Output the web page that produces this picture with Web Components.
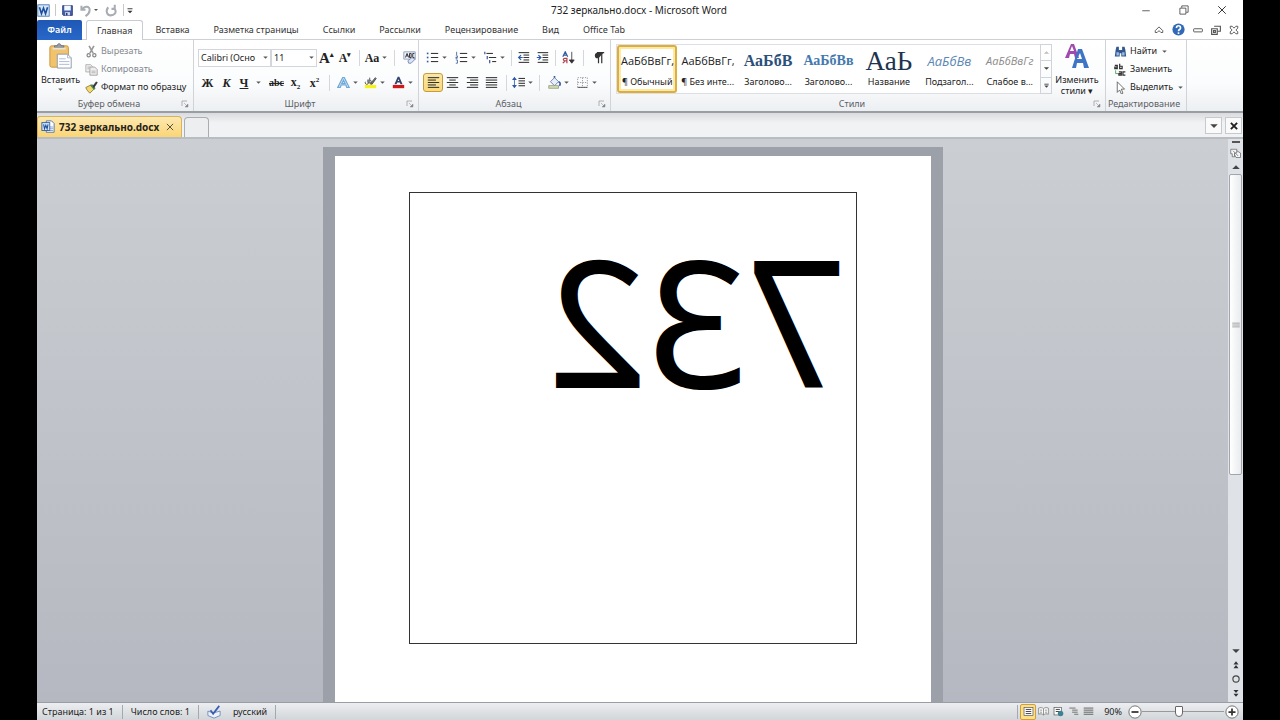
<!DOCTYPE html>
<html lang="ru">
<head>
<meta charset="utf-8">
<title>732 зеркально.docx - Microsoft Word</title>
<style>
html,body{margin:0;height:100%;background:#000}
body{font:9px/14px "Noto Sans","Open Sans",sans-serif;color:#222;overflow:hidden}
</style>
</head>
<body>
<word-app></word-app>
<script>
const base = `
*{box-sizing:border-box}
button,select,input{font:inherit;color:inherit;margin:0}
button{border:0;background:none;padding:0;display:flex;align-items:center;justify-content:center;white-space:nowrap}
a{color:inherit;text-decoration:none}
svg{display:block}
`;
function define(name, css, html) {
  customElements.define(name, class extends HTMLElement {
    constructor() {
      super();
      const markup = typeof html === 'function' ? html(this) : html;
      this.attachShadow({mode: 'open'}).innerHTML = `<style>${base}${css}</style>${markup}`;
    }
  });
}

const lines = (rows, c = '#333') => rows.map(([y, a, b]) => `<path d="M${a} ${y}H${b}" stroke="${c}" stroke-width="1.3"/>`).join('');
const icons = {
  word: `<rect x="1" y="1" width="14" height="14" fill="#d5e6f8" stroke="#3a6cab"/><path d="M3 4l2.500 8L8 5l2.500 7L13 4" fill="none" stroke="#1b4f9c" stroke-width="2"/>`,
  save: `<path d="M2 2h12v12H3l-1-1z" fill="#4560a8" stroke="#27397a"/><rect x="4" y="2" width="8" height="6" fill="#f4f7fc"/><rect x="5" y="10" width="6" height="4" fill="#d3daea"/><rect x="6" y="11" width="2" height="3" fill="#27397a"/>`,
  undo: `<path d="M3 2v5h5M4 7c3-6 10-4 9 1 0 3-2 5-5 7" fill="none" stroke="#a9acb2" stroke-width="2.500"/>`,
  redo: `<path d="M12 1v5H8M12 6c3 5-1 8-5 8s-7-5-3-10" fill="none" stroke="#a9acb2" stroke-width="2.500"/>`,
  qat: `<path d="M4 6h8" stroke="#333" stroke-width="1.500"/><path d="M4 9h8l-4 4z" fill="#333"/>`,
  arrow: `<path d="M4 6h8l-4 4z" fill="#555"/>`,
  up: `<path d="M2 11h12L8 5z" fill="#444"/>`,
  down: `<path d="M2 5h12l-6 6z" fill="#444"/>`,
  more: `<path d="M3 5h10" stroke="#444" stroke-width="2"/><path d="M3 8h10l-5 5z" fill="#444"/>`,
  paste: `<rect x="2" y="3" width="20" height="23" rx="2" fill="#f0c36c" stroke="#c9953c"/><path d="M7 5V3h3c0-3 4-3 4 0h3v2z" fill="#9a9ea6" stroke="#6e727a"/><path d="M5 6h14" stroke="#e8e3d6" stroke-width="2"/><path d="M10 12h11l4 4v11H10z" fill="#fff" stroke="#8d97ab"/><path d="M21 12v4h4M12 17h7m-7 3h11m-11 3h11" fill="none" stroke="#a9b8d4"/>`,
  cut: `<path d="M5 1l5 9M11 1L6 10" stroke="#999" stroke-width="2"/><circle cx="4.500" cy="12.500" r="2" fill="none" stroke="#888" stroke-width="1.500"/><circle cx="11.500" cy="12.500" r="2" fill="none" stroke="#888" stroke-width="1.500"/>`,
  copy: `<path d="M1 2h6l2 2v7H1z" fill="#eee" stroke="#aaa"/><path d="M6 5h6l3 3v7H6z" fill="#eee" stroke="#999"/><path d="M3 5h3M3 7h2M8 10h5M8 12h5" stroke="#aaa"/>`,
  brush: `<path d="M1 8l6-3 4 5-5 5C4 13 2 11 1 8z" fill="#f1d96b" stroke="#8a7430"/><path d="M6 5l3-1 4 5-2 2z" fill="#4a8a57"/><path d="M10 6l4-5 1 1-4 6z" fill="#333" stroke="#333"/>`,
  launch: `<path d="M2 12V2h10" fill="none" stroke="#999" stroke-width="1.500"/><path d="M6 6l6 6M14 8v6H8z" fill="#888" stroke="#888"/>`,
  grow: `<path d="M12 5l2-3 2 3z" fill="#222"/>`,
  shrink: `<path d="M12 2h4l-2 3z" fill="#222"/>`,
  clear: `<path d="M1 1h14v9H1z" fill="#eef2fa" stroke="#8090b4"/><path d="M3 8l2-5 2 5M4 6h2M8 3v5h2V3H8M14 3h-2v5h2" fill="none" stroke="#333" stroke-width="1.200"/><path d="M6 12l5-4 4 2-5 5H7z" fill="#dbe3f2" stroke="#6a7fae"/>`,
  outlineA: `<path d="M1 14L7 2h2l6 12h-3l-1-3H5l-1 3zM6 9h4L8 5z" fill="#e8f3fd" stroke="#6fa8d8" stroke-width="1.500"/>`,
  marker: `<path d="M2 7a2 2 0 1 0 3 0V4M5 9V5M7 2v7a2 2 0 1 0 0-4" fill="none" stroke="#444"/><path d="M9 8l5-6 1 1-5 7-2 0z" fill="#777" stroke="#444"/><rect x="1" y="11" width="14" height="4" fill="#f7f218"/>`,
  colorA: `<path d="M3 10L7 1h2l4 9h-2.500l-1-2h-3l-1 2zM7 6h2L8 4z" fill="#34456d"/><rect x="1" y="11" width="14" height="4" fill="#cf1919"/>`,
  bullets: `<g fill="#3a5a96"><rect x="1" y="2" width="2" height="2"/><rect x="1" y="7" width="2" height="2"/><rect x="1" y="12" width="2" height="2"/></g>` + lines([[3,6,15],[8,6,15],[13,6,15]]),
  numbers: `<path d="M2 1v4M1 6h2v2H1v1h2M1 11h2v4H1" fill="none" stroke="#3a5a96"/>` + lines([[3,6,15],[8,6,15],[13,6,15]]),
  multi: `<path d="M1 1v3M4 6v4M7 11v4" stroke="#3a5a96" stroke-width="1.500"/>` + lines([[3,3,11],[8,6,15],[13,10,15]]),
  outdent: lines([[2,2,15],[5,8,15],[8,8,15],[11,8,15],[14,2,15]]) + `<path d="M7 8H2m3-3L2 8l3 3" fill="none" stroke="#2c58a8" stroke-width="1.500"/>`,
  indent: lines([[2,2,15],[5,8,15],[8,8,15],[11,8,15],[14,2,15]]) + `<path d="M1 8h5M3 5l3 3-3 3" fill="none" stroke="#2c58a8" stroke-width="1.500"/>`,
  sort: `<path d="M1 7l3-6 3 6M2 5h4" fill="none" stroke="#335a9c" stroke-width="1.500"/><path d="M6 15V9H3.500C1 9 1 12 3.500 12H6M4 12l-3 3" fill="none" stroke="#b0434b" stroke-width="1.500"/><path d="M12 1v11M9 11l3 4 3-4z" fill="#333" stroke="#333"/>`,
  pilcrow: `<path d="M14 2H7a3.500 3.500 0 0 0 0 7h1" fill="#333"/><path d="M8 2v13M12 2v13M6 2h9" stroke="#333" stroke-width="1.500"/>`,
  left: lines([[2,1,15],[5,1,11],[8,1,15],[11,1,11],[14,1,15]]),
  center: lines([[2,1,15],[5,4,12],[8,1,15],[11,4,12],[14,1,15]]),
  right: lines([[2,1,15],[5,5,15],[8,1,15],[11,5,15],[14,1,15]]),
  justify: lines([[2,1,15],[5,1,15],[8,1,15],[11,1,15],[14,1,15]]),
  spacing: `<path d="M3 3v10" stroke="#2c58a8"/><path d="M0 5l3-4 3 4zM0 11l3 4 3-4z" fill="#2c58a8"/>` + lines([[3,8,16],[6,8,16],[9,8,16],[12,8,16]]),
  bucket: `<path d="M3 7l5-5 5 5-5 5z" fill="#e9eff8" stroke="#56709f"/><path d="M8 2V0M13 7c3 1 2 4 1 5" fill="none" stroke="#2c58a8" stroke-width="2"/><rect x="1" y="12" width="12" height="3" fill="#d9e3b4" stroke="#8b9673"/>`,
  borders: `<path d="M2 2h12v12H2zM8 2v12M2 8h12" fill="none" stroke="#888" stroke-dasharray="1.500 1.500"/><path d="M2 14h12" stroke="#444"/>`,
  styles: `<path d="M1 15L7 1h3l5 14h-4l-1-4H6l-1 4zM6 8h4L8 3z" fill="#a04aae"/><path d="M8 25l6-19h4l7 19h-5l-1-5h-6l-1 5zM13 16h5l-2-6z" fill="#3d74c6"/>`,
  find: `<path d="M2 6l1-4h3v4h4V2h3l1 4 1 8H9v-4H7v4H1z" fill="#31588f"/><path d="M3 9h3v4H3zM10 9h3v4h-3z" fill="#9dbbe0"/>`,
  replace: `<path d="M1 3h3v4H1V5h3M7 1v6h3V4H7M6 11h3v4H6v-2h3M14 11h-3v4h3" fill="none" stroke="#333" stroke-width="1.500"/><path d="M2 9v4h3" fill="none" stroke="#3a9c46"/>`,
  cursor: `<path d="M4 1l9 9H9l2 5-2 1-2-5-3 3z" fill="#fff" stroke="#555"/>`,
  min: `<path d="M3 9h10" stroke="#333"/>`,
  restore: `<path d="M2.500 5.500h8v8h-8zM5 5V2.500h8.500V11H11" fill="none" stroke="#333"/>`,
  close: `<path d="M3 3l10 10M13 3L3 13" stroke="#333" stroke-width="1.300"/>`,
  bold: `<path d="M3 3l10 10M13 3L3 13" stroke="#222" stroke-width="3"/>`,
  collapse: `<path d="M2 9l6-6 6 6v3H11L8 9l-3 3H2z" fill="#fff" stroke="#555" stroke-width="1.500"/>`,
  help: `<circle cx="8" cy="8" r="7.500" fill="#2f69b7"/><path d="M5.500 6c0-3.500 5-3.500 5 0 0 2-2.500 2-2.500 4M8 11.500v2" fill="none" stroke="#fff" stroke-width="2"/>`,
  bar: `<rect x="1" y="6" width="14" height="5" rx="1" fill="#fff" stroke="#555" stroke-width="1.500"/>`,
  mdi: `<path d="M5 2h10v8h-4M1 6h9v9H1zM4 9h3v3H4z" fill="none" stroke="#555" stroke-width="1.800"/>`,
  mdx: `<path d="M2 2h3l3 3 3-3h3v3l-3 3 3 3v3h-3l-3-3-3 3H2v-3l3-3-3-3z" fill="#fff" stroke="#555" stroke-width="1.500"/>`,
  doc: `<path d="M6 1h6l3 3v10H6z" fill="#fff" stroke="#4a6da6"/><path d="M10 8h4M10 10h4M10 12h4" stroke="#7c9bcc"/><rect x="1" y="3" width="9" height="9" fill="#d6e5f7" stroke="#2c5aa0"/><path d="M3 5l1 5 1.500-4L7 10l1-5" fill="none" stroke="#1b4f9c" stroke-width="1.200"/>`,
  ruler: `<path d="M1 3h8v5H6v5H3V9H1zM9 5l5 3v6H8l-2-4" fill="#f5f6f8" stroke="#666"/><path d="M4 5l7 7" stroke="#666"/>`,
  grip: `<path d="M2 5h12M2 8h12M2 11h12" stroke="#777"/>`,
  pgup: `<path d="M4 7h8L8 2zM4 13h8L8 8z" fill="#333"/>`,
  pgdn: `<path d="M4 3h8L8 8zM4 9h8l-4 5z" fill="#333"/>`,
  ball: `<circle cx="8" cy="8" r="5" fill="#dfe3e8" stroke="#444" stroke-width="1.800"/>`,
  spell: `<path d="M1 7l6 2 8-2v5l-7 3-7-3z" fill="#eef3fb" stroke="#6c87bd"/><path d="M4 6l3 4 7-9" fill="none" stroke="#3a5fb0" stroke-width="2"/>`,
  print: `<rect x="1.500" y="2" width="13" height="12" fill="#fff" stroke="#555"/>` + lines([[5,4,12],[8,4,12],[11,4,12]]),
  read: `<path d="M8 4C6 2 3 2 1 3v9c2-1 5-1 7 1 2-2 5-2 7-1V3c-2-1-5-1-7 1v9M3 6h3M3 9h3M10 6h3M10 9h3" fill="#fff" stroke="#666"/>`,
  web: `<rect x="1.500" y="2" width="11" height="11" fill="#fff" stroke="#555"/>` + lines([[5,4,10],[8,4,9]]) + `<circle cx="11" cy="11" r="4" fill="#3e8291"/>`,
  outline: lines([[3,2,11],[6,6,14],[9,6,14],[12,9,15]], '#666'),
  draft: lines([[3,1,15],[6,1,15],[9,1,15],[12,1,15]], '#555'),
  minus: `<circle cx="8" cy="8" r="7" fill="#fff" stroke="#666"/><path d="M4 8h8" stroke="#333" stroke-width="2"/>`,
  plus: `<circle cx="8" cy="8" r="7" fill="#fff" stroke="#666"/><path d="M4 8h8M8 4v8" stroke="#333" stroke-width="2"/>`
};
const large = {paste: 28, styles: 26};

define('ui-icon', `:host{display:block;flex:none;width:var(--s,13px);height:var(--s,13px)}svg{width:100%;height:100%}`,
  el => { const n = el.getAttribute('name'), v = large[n] || 16;
    return `<svg viewBox="0 0 ${v} ${v}" aria-hidden="true">${icons[n]}</svg>`; });

define('tool-sep', `:host{display:block;flex:none;width:1px;height:16px;background:#d4d7db;margin:0 var(--g,5px)}`, '');

/* Ribbon button holding an icon or a glyph, with an optional drop-down arrow. */
define('tool-button', `
:host{display:block;flex:none;width:var(--w,19px)}
button{width:100%;height:19px;gap:1px;border:1px solid transparent;border-radius:3px}
:host([pressed]) button{border-color:#c89b3a;background:linear-gradient(#fbe6a2,#f9d97a)}
.arr{--s:9px}`,
  el => `<button type="button" aria-label="${el.getAttribute('label') || el.textContent.trim()}">${el.hasAttribute('icon') ? `<ui-icon name="${el.getAttribute('icon')}"></ui-icon>` : ''}<slot></slot>${el.hasAttribute('menu') ? '<ui-icon class="arr" name="arrow"></ui-icon>' : ''}</button>`);

define('text-tool', `
:host{display:block;flex:none}
button{height:18px;gap:3px}
:host([off]) button{color:#85898e}
.arr{--s:9px}`,
  el => `<button type="button"><ui-icon name="${el.getAttribute('icon')}"></ui-icon><slot></slot>${el.hasAttribute('menu') ? '<ui-icon class="arr" name="arrow"></ui-icon>' : ''}</button>`);

define('big-tool', `
:host{display:block;flex:none}
button{flex-direction:column;width:100%;line-height:11px;white-space:normal}
ui-icon{--s:26px}
.arr{--s:9px}
span{padding-top:5px}`,
  el => `<button type="button"><ui-icon name="${el.getAttribute('icon')}"></ui-icon><span><slot></slot></span>${el.hasAttribute('menu') ? '<ui-icon class="arr" name="arrow"></ui-icon>' : ''}</button>`);

define('combo-box', `
:host{display:flex;align-items:center;flex:none;width:var(--w);height:18px;border:1px solid #d3d6da;background:#fff}
select{appearance:none;border:0;background:none;flex:1;min-width:0;padding:0 0 0 2px;outline:0}
ui-icon{--s:9px}`,
  el => `<select aria-label="${el.getAttribute('label')}"><option>${el.getAttribute('value')}</option></select><ui-icon name="arrow"></ui-icon>`);

define('ribbon-group', `
:host{display:flex;flex-direction:column;flex:none;width:var(--gw);border-right:1px solid #d0d4d9}
.body{flex:1;display:flex;padding:var(--p,0 4px);min-height:0}
footer{display:flex;align-items:center;height:14px;color:#5c6065;padding-right:4px}
footer span{flex:1;text-align:center;white-space:nowrap}
ui-icon{--s:8px}`,
  el => `<div class="body"><slot></slot></div><footer><span>${el.getAttribute('label')}</span>${el.hasAttribute('launcher') ? '<ui-icon name="launch"></ui-icon>' : ''}</footer>`);

define('tool-rows', `
:host{display:flex;flex-direction:column;gap:6px;padding-top:8px}
::slotted(div){display:flex;align-items:center;height:19px}`, '<slot></slot>');

define('style-card', `
:host{display:block;min-width:0}
button{flex-direction:column;width:100%;height:48px;border:2px solid transparent;overflow:hidden}
:host([current]) button{border-color:#dcae3f;border-radius:3px;box-shadow:inset 0 0 0 2px #fbe9a4}
.sample{height:28px;width:100%;padding:0 2px;overflow:hidden;display:flex;align-items:center;justify-content:safe center;font:var(--f,11px/28px "Open Sans",sans-serif);color:var(--c,#222)}
.name{height:16px;line-height:14px}`,
  el => `<button type="button"><span class="sample">${el.getAttribute('sample')}</span><span class="name"><slot></slot></span></button>`);

define('title-bar', `
:host{display:grid;grid-template-columns:1fr auto 1fr;align-items:center;height:20px;background:#fff;font-size:10px;color:#222}
.qat,.win{display:flex;align-items:center;height:18px}
.qat{gap:5px}
.qat .arr{--s:8px}
i{width:1px;height:12px;background:#c8c8c8}
.qat .tight{margin-left:-4px}
.win{justify-content:flex-end;gap:26px;padding-right:15px}
.win ui-icon{--s:12px}
h1{margin:0;font:inherit;padding-right:2px}`,
`<div class="qat"><ui-icon name="word"></ui-icon><i></i><button aria-label="Сохранить"><ui-icon name="save"></ui-icon></button><button aria-label="Отменить"><ui-icon name="undo"></ui-icon><ui-icon class="arr" name="arrow"></ui-icon></button><button aria-label="Повторить"><ui-icon name="redo"></ui-icon></button><i></i><button class="tight" aria-label="Настройка панели"><ui-icon name="qat" style="--s:10px"></ui-icon></button></div>
<h1>732 зеркально.docx - Microsoft Word</h1>
<div class="win"><button aria-label="Свернуть"><ui-icon name="min"></ui-icon></button><button aria-label="Восстановить"><ui-icon name="restore"></ui-icon></button><button aria-label="Закрыть"><ui-icon name="close"></ui-icon></button></div>`);

define('ribbon-tabs', `
:host{display:flex;height:20px;background:#fff;border-bottom:1px solid #cdd1d6;color:#333}
nav{display:flex}
a{padding:0 12px;line-height:20px;height:20px;white-space:nowrap}
.file{width:45px;padding:0;text-align:center;background:linear-gradient(#1f57b4,#2868c9);color:#fff;border-radius:2px 2px 0 0;margin-right:4px;font-weight:600}
.on{padding:0 10px;border:1px solid #c8ccd1;border-bottom:0;border-radius:3px 3px 0 0;background:#fff;line-height:19px}
div{display:flex;align-items:center;gap:8px;margin-left:auto;padding-right:4px}
div ui-icon{--s:10px}
div .help{--s:13px}`,
`<nav><a class="file" href="#">Файл</a><a class="on" href="#">Главная</a><a href="#">Вставка</a><a href="#">Разметка страницы</a><a href="#">Ссылки</a><a href="#">Рассылки</a><a href="#">Рецензирование</a><a href="#">Вид</a><a href="#">Office Tab</a></nav>
<div><button aria-label="Свернуть ленту"><ui-icon name="collapse"></ui-icon></button><button aria-label="Справка"><ui-icon class="help" name="help"></ui-icon></button><button aria-label="Свернуть окно"><ui-icon name="bar"></ui-icon></button><button aria-label="Восстановить окно"><ui-icon name="mdi"></ui-icon></button><button aria-label="Закрыть окно"><ui-icon name="mdx"></ui-icon></button></div>`);

define('word-ribbon', `
:host{display:flex;height:73px;background:linear-gradient(#fff,#fbfcfd 60%,#eceff2);border-bottom:2px solid #9a9da2}
.stack{display:flex;flex-direction:column;padding-top:2px}
.gl{font:bold 12px/16px "Liberation Serif",serif;color:#222}
.big{font-size:15px}
.it{font-style:italic}
.un{text-decoration:underline;padding-right:5px}
.st{text-decoration:line-through;font-size:10px}
sub,sup{font-size:7px;line-height:7px}
.gallery{display:grid;grid-template-columns:repeat(7,minmax(0,1fr));width:424px;height:50px;border:1px solid #dcdfe3;border-right:0;background:#fff;margin-top:4px}
.scroll{display:grid;width:12px;height:50px;margin-top:4px;border:1px solid #d0d3d7}
.scroll button+button{border-top:1px solid #d0d3d7}
.scroll ui-icon{--s:7px}
.edit{padding-left:4px}`,
`<ribbon-group label="Буфер обмена" launcher style="--gw:157px;--p:0 2px">
  <big-tool icon="paste" menu style="width:43px;padding-top:3px">Вставить</big-tool>
  <div class="stack" style="padding-left:3px"><text-tool icon="cut" off>Вырезать</text-tool><text-tool icon="copy" off>Копировать</text-tool><text-tool icon="brush">Формат по образцу</text-tool></div>
</ribbon-group>
<ribbon-group label="Шрифт" launcher style="--gw:225px">
  <tool-rows>
    <div><combo-box label="Шрифт" value="Calibri (Осно" style="--w:73px"></combo-box><combo-box label="Размер" value="11" style="--w:46px"></combo-box><tool-button label="Увеличить размер"><span class="gl big">A<sup>▴</sup></span></tool-button><tool-button label="Уменьшить размер" style="--w:18px"><span class="gl">A<sup>▾</sup></span></tool-button><tool-sep></tool-sep><tool-button label="Регистр" menu style="--w:24px"><span class="gl">Aa</span></tool-button><tool-sep></tool-sep><tool-button icon="clear" label="Очистить формат"></tool-button></div>
    <div><tool-button><span class="gl">Ж</span></tool-button><tool-button><span class="gl it">К</span></tool-button><tool-button menu style="--w:31px"><span class="gl un">Ч</span></tool-button><tool-button><span class="gl st">abc</span></tool-button><tool-button><span class="gl">x<sub>2</sub></span></tool-button><tool-button><span class="gl">x<sup>2</sup></span></tool-button><tool-sep></tool-sep><tool-button icon="outlineA" label="Эффекты" menu style="--w:26px"></tool-button><tool-button icon="marker" label="Выделение" menu style="--w:28px"></tool-button><tool-button icon="colorA" label="Цвет" menu style="--w:28px"></tool-button></div>
  </tool-rows>
</ribbon-group>
<ribbon-group label="Абзац" launcher style="--gw:192px">
  <tool-rows>
    <div><tool-button icon="bullets" label="Маркеры" menu style="--w:29px"></tool-button><tool-button icon="numbers" label="Нумерация" menu style="--w:29px"></tool-button><tool-button icon="multi" label="Список" menu style="--w:28px"></tool-button><tool-sep style="--g:2px"></tool-sep><tool-button icon="outdent" label="Уменьшить отступ"></tool-button><tool-button icon="indent" label="Увеличить отступ"></tool-button><tool-sep style="--g:3px"></tool-sep><tool-button icon="sort" label="Сортировка"></tool-button><tool-sep></tool-sep><tool-button icon="pilcrow" label="Знаки"></tool-button></div>
    <div><tool-button icon="left" label="По левому краю" pressed style="--w:20px"></tool-button><tool-button icon="center" label="По центру"></tool-button><tool-button icon="right" label="По правому краю" style="--w:20px"></tool-button><tool-button icon="justify" label="По ширине"></tool-button><tool-sep></tool-sep><tool-button icon="spacing" label="Интервал" menu style="--w:22px"></tool-button><tool-sep></tool-sep><tool-button icon="bucket" label="Заливка" menu style="--w:28px"></tool-button><tool-button icon="borders" label="Границы" menu style="--w:28px"></tool-button></div>
  </tool-rows>
</ribbon-group>
<ribbon-group label="Стили" launcher style="--gw:495px;--p:0 2px 0 5px">
  <div class="gallery">
    <style-card current sample="АаБбВвГг,">¶ Обычный</style-card>
    <style-card sample="АаБбВвГг,">¶ Без инте...</style-card>
    <style-card sample="АаБбВ" style="--f:bold 16px/28px 'Liberation Serif',serif;--c:#2b5079">Заголово...</style-card>
    <style-card sample="АаБбВв" style="--f:bold 14px/28px 'Liberation Serif',serif;--c:#4379ae">Заголово...</style-card>
    <style-card sample="АаЬ" style="--f:27px/28px 'Liberation Serif',serif;--c:#1d3450">Название</style-card>
    <style-card sample="АаБбВв" style="--f:italic 13px/28px 'Open Sans',sans-serif;--c:#5c87b4">Подзагол...</style-card>
    <style-card sample="АаБбВвГг" style="--f:italic 11px/28px 'Open Sans',sans-serif;--c:#8a8a8a">Слабое в...</style-card>
  </div>
  <div class="scroll"><button aria-label="Вверх" style="opacity:.35"><ui-icon name="up"></ui-icon></button><button aria-label="Вниз"><ui-icon name="down"></ui-icon></button><button aria-label="Ещё"><ui-icon name="more"></ui-icon></button></div>
  <big-tool icon="styles" style="width:50px;padding-top:3px">Изменить стили&nbsp;▾</big-tool>
</ribbon-group>
<ribbon-group label="Редактирование" style="--gw:81px">
  <div class="stack edit"><text-tool icon="find" menu>Найти</text-tool><text-tool icon="replace">Заменить</text-tool><text-tool icon="cursor" menu>Выделить</text-tool></div>
</ribbon-group>`);

define('doc-tabs', `
:host{display:flex;align-items:flex-end;height:26px;background:linear-gradient(#d9dbde,#f1f2f3 40%,#f1f2f3);border-bottom:2px solid #b9bcc1}
.tab{display:flex;align-items:center;gap:4px;height:21px;padding:0 6px 0 3px;background:linear-gradient(#fce9b0,#fbd575);border:1px solid #d9b35c;border-bottom:0;border-radius:3px 4px 0 0;font-weight:bold;font-size:10px;color:#222}
.tab button{margin-left:2px}
.new{width:25px;height:20px;margin-left:2px;border:1px solid #a9acb1;border-bottom:0;border-radius:4px 4px 0 0;background:#eceef0}
.end{display:flex;gap:3px;margin-left:auto;padding:0 1px 3px 0}
.end button{width:17px;height:17px;border:1px solid #c6c9cd;background:#fafafa}
.end ui-icon{--s:10px}`,
`<div class="tab"><ui-icon name="doc" style="--s:14px"></ui-icon><a href="#">732 зеркально.docx</a><button aria-label="Закрыть вкладку"><ui-icon name="close" style="--s:10px"></ui-icon></button></div><button class="new" aria-label="Новая вкладка"></button>
<div class="end"><button aria-label="Список вкладок"><ui-icon name="down"></ui-icon></button><button aria-label="Закрыть"><ui-icon name="bold"></ui-icon></button></div>`);

define('doc-page', `
:host{display:block;flex:none;width:620px;padding:9px 12px 0;background:#9ba0a9}
article{height:100%;background:#fff;padding:36px 74px 0}
.frame{height:452px;border:1px solid #333;padding:22px 10px 0}
/* Text box rotated 180° about its vertical axis. */
p{margin:0;transform:scaleX(-1);font:174px/210px "Open Sans",sans-serif;color:#000;-webkit-text-stroke:2px #000;stroke-linejoin:round}`,
`<article><div class="frame"><p>732</p></div></article>`);

define('scroll-bar', `
:host{display:flex;flex-direction:column;align-items:center;flex:none;width:15px;background:#dfe2e6;padding:2px 0}
.split{width:8px;height:2px;background:#555;margin-bottom:3px}
button{height:14px;width:15px}
ui-icon{--s:10px}
.track{flex:1;display:flex;flex-direction:column;width:100%}
.thumb{flex:302;border:1px solid #a2a6ac;border-radius:2px;background:linear-gradient(90deg,#fff,#e9ebee);display:flex;align-items:center;justify-content:center;width:13px;margin-left:1px}
.rest{flex:170}`,
`<div class="split"></div><button aria-label="Линейка"><ui-icon name="ruler" style="--s:12px"></ui-icon></button><button aria-label="Вверх"><ui-icon name="up"></ui-icon></button>
<div class="track"><div class="thumb"><ui-icon name="grip"></ui-icon></div><div class="rest"></div></div>
<button aria-label="Вниз"><ui-icon name="down"></ui-icon></button><button aria-label="Предыдущая страница"><ui-icon name="pgup"></ui-icon></button><button aria-label="Объект перехода"><ui-icon name="ball"></ui-icon></button><button aria-label="Следующая страница"><ui-icon name="pgdn"></ui-icon></button>`);

define('work-area', `
:host{display:flex;flex:1;min-height:0}
.canvas{flex:1;display:flex;justify-content:center;padding-top:8px;background:linear-gradient(#cbced2,#b5b8c0)}`,
`<div class="canvas"><doc-page></doc-page></div><scroll-bar></scroll-bar>`);

define('status-bar', `
:host{display:flex;align-items:center;height:18px;background:linear-gradient(#eceef0,#d2d5d9);border-top:1px solid #9a9da3;color:#222}
span{white-space:nowrap}
i{width:1px;height:14px;background:#a5a8ad;margin:0 8px}
.right{display:flex;align-items:center;margin-left:auto;padding-right:4px}
.right i{margin:0 2px}
.right button{width:15px;height:16px}
.right ui-icon{--s:11px}
.right .on{width:16px;border:1px solid #cf9f38;border-radius:2px;background:#fbdf8a}
.right .zoom ui-icon{--s:14px}
label{margin:0 5px 0 8px}
input{appearance:none;width:82px;height:14px;background:linear-gradient(#999,#999) center/100% 1px no-repeat}
input::-webkit-slider-thumb{appearance:none;width:8px;height:11px;border:1px solid #666;border-radius:1px 1px 4px 4px;background:#fff}`,
`<span style="padding-left:5px">Страница: 1 из 1</span><i></i><span>Число слов: 1</span><i></i><button aria-label="Правописание"><ui-icon name="spell" style="--s:14px"></ui-icon></button><span style="padding-left:12px">русский</span><i></i>
<div class="right"><i></i><button class="on" aria-label="Разметка страницы"><ui-icon name="print"></ui-icon></button><button aria-label="Режим чтения"><ui-icon name="read"></ui-icon></button><button aria-label="Веб-документ"><ui-icon name="web"></ui-icon></button><button aria-label="Структура"><ui-icon name="outline"></ui-icon></button><button aria-label="Черновик"><ui-icon name="draft"></ui-icon></button><label for="z">90%</label><button class="zoom" aria-label="Уменьшить"><ui-icon name="minus"></ui-icon></button><input id="z" type="range" min="0" max="100" value="45"><button class="zoom" aria-label="Увеличить"><ui-icon name="plus"></ui-icon></button></div>`);

define('word-app', `
:host{display:flex;flex-direction:column;height:100vh;margin:0 37px;background:#fff;overflow:hidden}`,
`<title-bar></title-bar><ribbon-tabs></ribbon-tabs><word-ribbon></word-ribbon><doc-tabs></doc-tabs><work-area></work-area><status-bar></status-bar>`);
</script>
</body>
</html>
